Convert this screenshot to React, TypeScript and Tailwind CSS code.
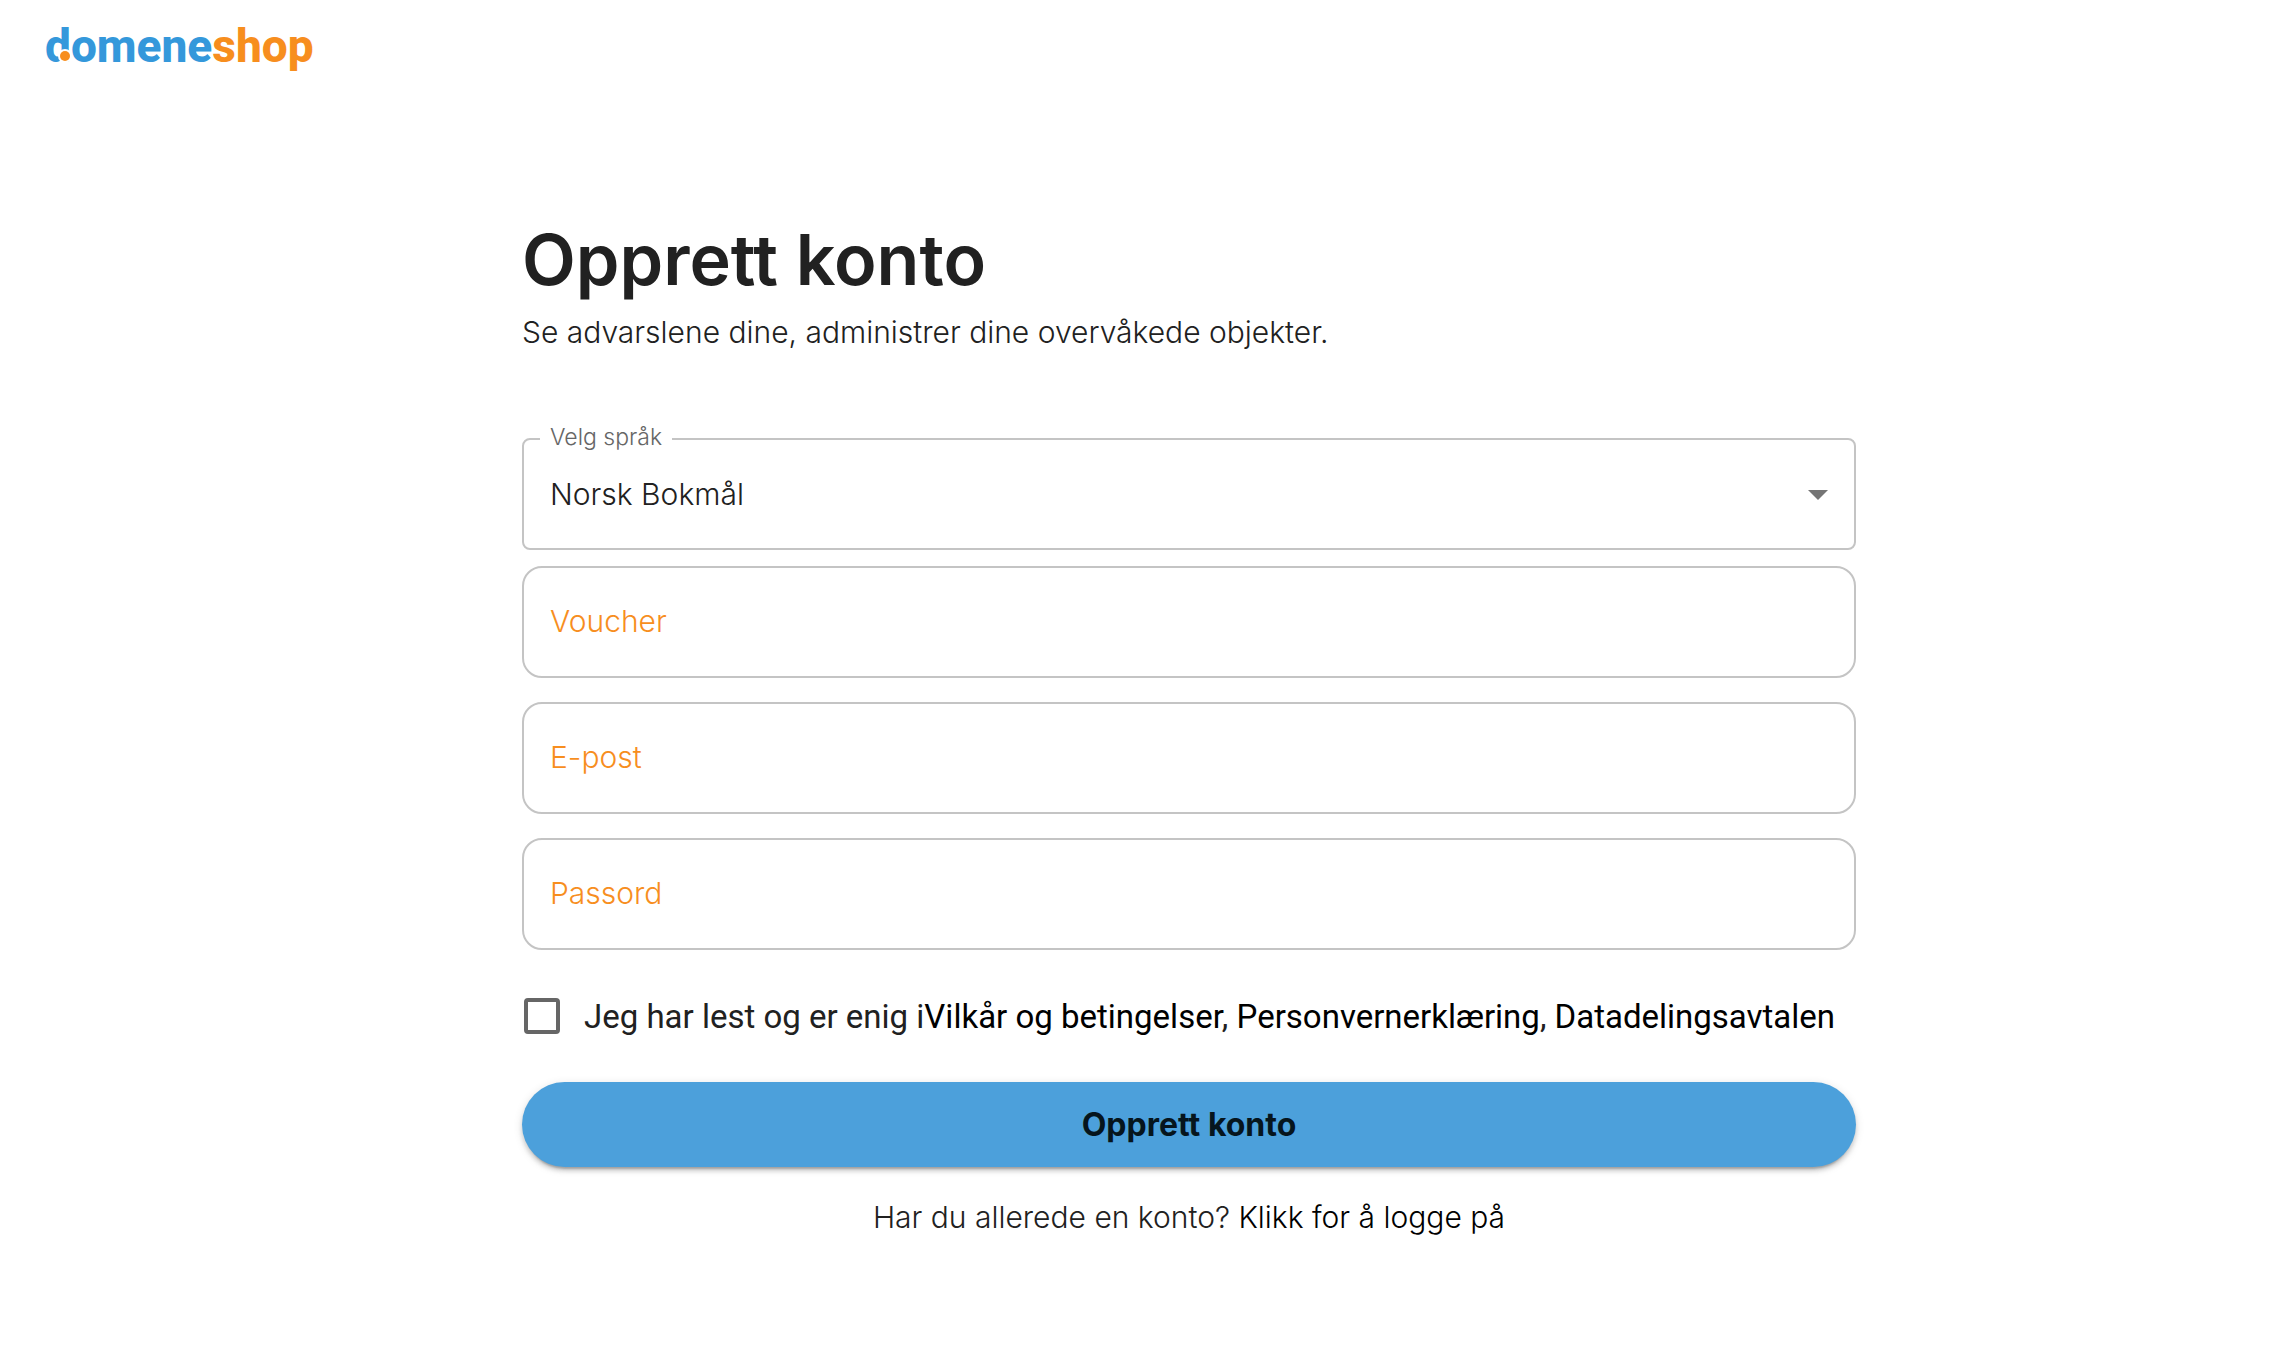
import { useState } from "react";

const fields = [
  { name: "voucher", type: "text", label: "Voucher" },
  { name: "email", type: "email", label: "E-post" },
  { name: "password", type: "password", label: "Passord" },
];

function Logo() {
  return (
    <svg width="280" height="64" viewBox="0 0 280 64" role="img" aria-label="domeneshop">
      <text x="1" y="46" fill="#3498db" fontFamily="Roboto, sans-serif" fontWeight="800" fontSize="46">
        domene<tspan fill="#f78e1e">shop</tspan>
      </text>
      <circle cx="21" cy="40" r="7" fill="#fff" />
      <circle cx="21" cy="40" r="5" fill="#f78e1e" />
    </svg>
  );
}

export default function App() {
  const [accepted, setAccepted] = useState(false);

  return (
    <div className="min-h-screen bg-white font-['Inter',sans-serif] text-[#212121]">
      <header className="px-11 pt-4">
        <a href="#" className="inline-block align-top">
          <Logo />
        </a>
      </header>

      <main className="grid grid-cols-[522fr_1334fr_424fr] pt-[140px] pb-24">
        <div className="col-start-2">
          <h1 className="text-[70px] leading-[80px] font-semibold">Opprett konto</h1>
          <p className="mt-2 text-[30px] leading-[48px] font-light">
            Se advarslene dine, administrer dine overvåkede objekter.
          </p>

          <form className="mt-[82px]" onSubmit={(e) => e.preventDefault()}>
            <div className="relative">
              <label
                htmlFor="language"
                className="absolute -top-4 left-[18px] bg-white px-[10px] text-[23px] leading-[30px] font-light text-[#666]"
              >
                Velg språk
              </label>
              <select
                id="language"
                className="block h-28 w-full appearance-none rounded-lg border-2 border-[#c4c4c4] bg-white px-[26px] text-[30px] font-light"
              >
                <option>Norsk Bokmål</option>
              </select>
              <svg
                className="pointer-events-none absolute top-[52px] right-7"
                width="20"
                height="10"
                viewBox="0 0 20 10"
                fill="#757575"
              >
                <path d="M0 0h20L10 10z" />
              </svg>
            </div>

            <div className="mt-4 flex flex-col gap-6">
              {fields.map((f) => (
                <input
                  key={f.name}
                  type={f.type}
                  name={f.name}
                  aria-label={f.label}
                  placeholder={f.label}
                  className="h-28 w-full rounded-[20px] border-2 border-[#c4c4c4] px-[26px] pb-0.5 text-[30px] font-light placeholder:text-[#f78e1e] placeholder:opacity-100"
                />
              ))}
            </div>

            <div className="mt-12 flex h-9 items-center gap-6 pl-0.5">
              <input
                id="terms"
                type="checkbox"
                checked={accepted}
                onChange={(e) => setAccepted(e.target.checked)}
                className="size-9 shrink-0 appearance-none rounded border-4 border-[#666] checked:bg-[#4ca0db]"
              />
              <label htmlFor="terms" className="pt-0.5 font-['Roboto',sans-serif] text-[33px] leading-9">
                Jeg har lest og er enig i
                <a href="#" className="text-black">Vilkår og betingelser</a>,{" "}
                <a href="#" className="text-black">Personvernerklæring</a>,{" "}
                <a href="#" className="text-black">Datadelingsavtalen</a>
              </label>
            </div>

            <button
              type="submit"
              className="mt-12 block h-[85px] w-full rounded-full bg-[#4ca0db] text-[32px] font-bold text-[#06151d] shadow-[0_6px_2px_-4px_rgba(0,0,0,0.2),0_4px_4px_rgba(0,0,0,0.14),0_2px_10px_rgba(0,0,0,0.12)]"
            >
              Opprett konto
            </button>
          </form>

          <p className="mt-7 text-center text-[30px] leading-[44px] font-light">
            Har du allerede en konto?{" "}
            <a href="#" className="text-black">Klikk for å logge på</a>
          </p>
        </div>
      </main>
    </div>
  );
}
